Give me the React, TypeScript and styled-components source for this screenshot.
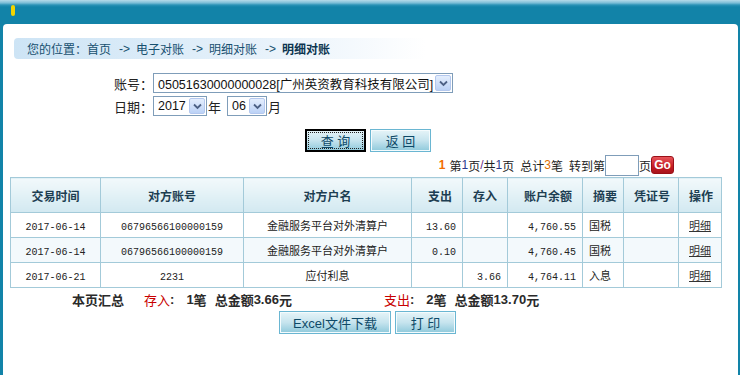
import * as React from "react"
import styled, { createGlobalStyle, css } from "styled-components"

const GlobalStyle = createGlobalStyle`
  html, body {
    margin: 0;
    padding: 0;
    background: #1283a8;
  }
  body {
    font-family: "Noto Sans CJK SC", "Liberation Sans", sans-serif;
    color: #222;
  }
  * { box-sizing: border-box; }
`

const Page = styled.div`
  width: 740px;
  height: 375px;
  overflow: hidden;
  display: flex;
  flex-direction: column;
`

const TopBar = styled.div`
  height: 24px;
  flex: none;
  background: linear-gradient(#b6dbea 0, #79bcd6 3px, #2a92b6 5px, #1283a8 7px, #1283a8 100%);
  padding: 5px 0 0 11px;
`

const Marker = styled.span`
  display: block;
  width: 4px;
  height: 11px;
  border-radius: 2px;
  background: #f2d400;
`

const Panel = styled.div`
  flex: 1;
  margin: 0 2px 0 3px;
  background: #fff;
  border-radius: 4px 4px 0 0;
  display: flex;
  flex-direction: column;
`

const Crumb = styled.div`
  margin: 14px 0 0 11px;
  width: 412px;
  height: 21px;
  border-radius: 4px;
  background: linear-gradient(90deg, #cde4f5 0%, #e4f0fa 55%, #ffffff 100%);
  padding-left: 13px;
  display: flex;
  align-items: center;
  font-size: 12px;
  color: #17506f;
  white-space: nowrap;
`

const Sep = styled.span`
  margin: 0 6px 0 8px;
  font-family: "Liberation Sans", sans-serif;
`

const Here = styled.b`
  color: #0c3550;
`

const Form = styled.div`
  margin-top: 14px;
  padding-left: 110px;
  display: flex;
  flex-direction: column;
  gap: 3px;
`

const FormRow = styled.div`
  display: flex;
  align-items: center;
  font-size: 13px;
`

const Label = styled.span`
  width: 40px;
  text-align: right;
  font-size: 13px;
  color: #222;
`

const SelectBox = styled.div<{ $w: number }>`
  width: ${({ $w }) => $w}px;
  height: 20px;
  border: 1px solid #7f9db9;
  background: #fff;
  display: flex;
  align-items: center;
  justify-content: space-between;
  padding: 0 1px 0 4px;
  font-family: "Liberation Sans", "Noto Sans CJK SC", sans-serif;
  font-size: 12.5px;
  color: #111;
  white-space: nowrap;
`

const Arrow = styled.span`
  width: 16px;
  height: 16px;
  border: 1px solid #b4c8ee;
  border-radius: 2px;
  background: linear-gradient(#e4eefd, #bcd2f6);
  display: flex;
  align-items: center;
  justify-content: center;
`

const Unit = styled.span`
  margin: 0 6px 0 1px;
  font-size: 13px;
`

const ButtonRow = styled.div<{ $left: number; $top: number }>`
  display: flex;
  gap: 4px;
  padding-left: ${({ $left }) => $left}px;
  margin-top: ${({ $top }) => $top}px;
`

const Btn = styled.button<{ $w: number; $focused?: boolean }>`
  width: ${({ $w }) => $w}px;
  height: 23px;
  padding: 0;
  border: 1px solid #6ab6d2;
  box-shadow: inset 0 0 0 1px #f4fbfd;
  background: linear-gradient(#e6f4f8 0%, #c6e4ee 50%, #8ec9db 100%);
  color: #0e4a68;
  font-family: "Liberation Sans", "Noto Sans CJK SC", sans-serif;
  font-size: 13px;
  cursor: pointer;
  ${({ $focused }) =>
    $focused &&
    css`
      border: 1px solid #000;
      box-shadow: inset 0 0 0 1px #000;
      outline: 1px dotted #222;
      outline-offset: -4px;
    `}
`

const Pager = styled.div`
  margin-top: 2px;
  padding-right: 64px;
  display: flex;
  justify-content: flex-end;
  align-items: center;
  height: 22px;
  font-size: 12px;
  color: #222;
  white-space: nowrap;
`

const Orange = styled.b`
  color: #f26d00;
  font-family: "Liberation Sans", sans-serif;
  margin-right: 4px;
`

const Digit = styled.span<{ $c: string }>`
  color: ${({ $c }) => $c};
  font-family: "Liberation Sans", sans-serif;
`

const Gap = styled.span`
  display: inline-block;
  width: 6px;
`

const PageInput = styled.input`
  width: 34px;
  height: 21px;
  border: 1px solid #7f9db9;
  padding: 0;
`

const Go = styled.span`
  width: 23px;
  height: 18px;
  border-radius: 3px;
  background: linear-gradient(#e8545a, #c41c24 60%, #a8141c);
  border: 1px solid #9a1018;
  color: #fff;
  font-family: "Liberation Sans", sans-serif;
  font-weight: bold;
  font-size: 12px;
  display: flex;
  align-items: center;
  justify-content: center;
`

const Table = styled.table`
  margin: 1px 0 0 7px;
  width: 711px;
  border-collapse: collapse;
  table-layout: fixed;
  border: 1px solid #a3cad9;
`

const Th = styled.th<{ $align?: string }>`
  height: 35px;
  border: 1px solid #a3cad9;
  background: linear-gradient(#f2f9fb, #d2e9f1);
  font-size: 12px;
  font-weight: bold;
  color: #1d3e52;
  text-align: ${({ $align }) => $align || "center"};
  padding: 0 10px;
  white-space: nowrap;
`

const Tr = styled.tr<{ $alt?: boolean }>`
  background: ${({ $alt }) => ($alt ? "#f3f9fc" : "#fff")};
`

const Td = styled.td<{ $align?: string }>`
  height: 25px;
  border: 1px solid #a3cad9;
  font-size: 11px;
  color: #222;
  text-align: ${({ $align }) => $align || "center"};
  padding: 0 6px;
  white-space: nowrap;
  overflow: hidden;
`

const Mono = styled.span`
  font-family: "Liberation Mono", monospace;
  font-size: 10px;
`

const Detail = styled.a`
  color: #333;
  text-decoration: underline;
  cursor: pointer;
`

const Summary = styled.div`
  margin-top: 3px;
  padding-left: 69px;
  display: flex;
  align-items: center;
  height: 16px;
  font-size: 13px;
  font-weight: bold;
  color: #2a2a2a;
  white-space: nowrap;
`

const Outline = styled.span`
  color: #c80000;
  font-weight: normal;
`

const SumNum = styled.span`
  font-family: "Liberation Sans", sans-serif;
`

const Spacer = styled.span<{ $w: number }>`
  width: ${({ $w }) => $w}px;
`

const Chevron = () => (
  <svg width="9" height="7" viewBox="0 0 9 7">
    <path d="M1 1.5 L4.5 5 L8 1.5" fill="none" stroke="#4d6185" strokeWidth="1.8" />
  </svg>
)

const Select = ({ w, value }: { w: number; value: string }) => (
  <SelectBox $w={w}>
    <span>{value}</span>
    <Arrow>
      <Chevron />
    </Arrow>
  </SelectBox>
)

const rows = [
  { date: "2017-06-14", acct: "06796566100000159", name: "金融服务平台对外清算户", out: "13.60", inn: "", bal: "4,760.55", memo: "国税" },
  { date: "2017-06-14", acct: "06796566100000159", name: "金融服务平台对外清算户", out: "0.10", inn: "", bal: "4,760.45", memo: "国税" },
  { date: "2017-06-21", acct: "2231", name: "应付利息", out: "", inn: "3.66", bal: "4,764.11", memo: "入息" },
]

const cols = [90, 143, 168, 51, 45, 75, 41, 55, 43]

const App: React.FC = () => {
  return (
    <Page>
      <GlobalStyle />
      <TopBar>
        <Marker />
      </TopBar>
      <Panel>
        <Crumb>
          您的位置：首页<Sep>-&gt;</Sep>电子对账<Sep>-&gt;</Sep>明细对账<Sep>-&gt;</Sep>
          <Here>明细对账</Here>
        </Crumb>

        <Form>
          <FormRow>
            <Label>账号：</Label>
            <Select w={300} value="05051630000000028[广州英资教育科技有限公司]" />
          </FormRow>
          <FormRow>
            <Label>日期：</Label>
            <Select w={54} value="2017" />
            <Unit>年</Unit>
            <Select w={40} value="06" />
            <Unit>月</Unit>
          </FormRow>
        </Form>

        <ButtonRow $left={302} $top={13}>
          <Btn $w={61} $focused>查 询</Btn>
          <Btn $w={61}>返 回</Btn>
        </ButtonRow>

        <Pager>
          <Orange>1</Orange>第<Digit $c="#2b3a8c">1</Digit>页<Digit $c="#6a2a8c">/</Digit>共
          <Digit $c="#2b3a8c">1</Digit>页<Gap />总计<Digit $c="#e07000">3</Digit>笔<Gap />转到第
          <PageInput />页<Go>Go</Go>
        </Pager>

        <Table>
          <colgroup>
            {cols.map((w, i) => (
              <col key={i} style={{ width: w }} />
            ))}
          </colgroup>
          <thead>
            <tr>
              <Th>交易时间</Th>
              <Th>对方账号</Th>
              <Th>对方户名</Th>
              <Th $align="right">支出</Th>
              <Th $align="right">存入</Th>
              <Th $align="right">账户余额</Th>
              <Th>摘要</Th>
              <Th>凭证号</Th>
              <Th>操作</Th>
            </tr>
          </thead>
          <tbody>
            {rows.map((r, i) => (
              <Tr key={i} $alt={i === 1}>
                <Td><Mono>{r.date}</Mono></Td>
                <Td><Mono>{r.acct}</Mono></Td>
                <Td>{r.name}</Td>
                <Td $align="right"><Mono>{r.out}</Mono></Td>
                <Td $align="right"><Mono>{r.inn}</Mono></Td>
                <Td $align="right"><Mono>{r.bal}</Mono></Td>
                <Td $align="left">{r.memo}</Td>
                <Td></Td>
                <Td><Detail>明细</Detail></Td>
              </Tr>
            ))}
          </tbody>
        </Table>

        <Summary>
          本页汇总
          <Spacer $w={20} />
          <Outline>存入</Outline>
          <SumNum>:</SumNum>
          <Spacer $w={12} />
          <SumNum>1</SumNum>笔<Spacer $w={8} />总金额<SumNum>3.66</SumNum>元
          <Spacer $w={92} />
          <Outline>支出</Outline>
          <SumNum>:</SumNum>
          <Spacer $w={12} />
          <SumNum>2</SumNum>笔<Spacer $w={8} />总金额<SumNum>13.70</SumNum>元
        </Summary>

        <ButtonRow $left={276} $top={4}>
          <Btn $w={112}>Excel文件下载</Btn>
          <Btn $w={61}>打 印</Btn>
        </ButtonRow>
      </Panel>
    </Page>
  )
}

export default App
